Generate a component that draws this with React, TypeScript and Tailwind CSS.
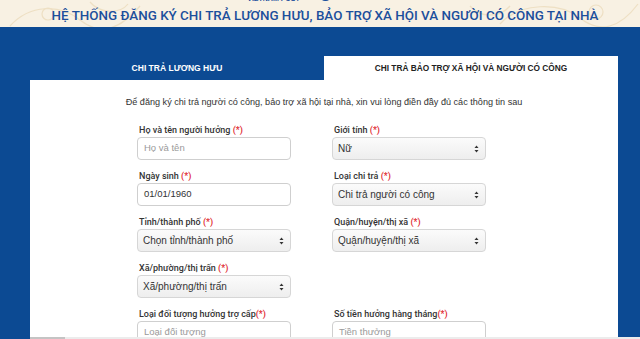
import React from "react";

const sans = { fontFamily: '"Liberation Sans", Arial, sans-serif' };

const Req = () => <span className="text-[#e0262d]">(*)</span>;

const Arrows = () => (
  <svg width="5" height="8" viewBox="0 0 5 8" className="shrink-0">
    <path d="M2.5 0.5 L4.5 3 L0.5 3 Z" fill="#333" />
    <path d="M2.5 7.5 L4.5 5 L0.5 5 Z" fill="#333" />
  </svg>
);

function Field({
  label,
  kind,
  value,
  placeholder,
  spaced = true,
}: {
  label: string;
  kind: "input" | "select";
  value?: string;
  placeholder?: string;
  spaced?: boolean;
}) {
  return (
    <div className="flex flex-col">
      <div
        className="mb-[1px] pl-[2px] text-[9px] leading-[12px] font-medium text-[#333]"
        style={{ fontFamily: "Roboto, sans-serif" }}
      >
        {label}
        {spaced ? " " : ""}
        <Req />
      </div>
      {kind === "input" ? (
        <div className="flex h-[23px] items-center rounded-[4px] border border-[#cfcfcf] bg-white px-[6px] text-[9.5px]">
          {value ? <span className="text-[#333]">{value}</span> : <span className="text-[#9a9a9a]">{placeholder}</span>}
        </div>
      ) : (
        <div className="flex h-[23px] items-center justify-between rounded-[4px] border border-[#d6d6d6] bg-gradient-to-b from-[#fbfbfb] to-[#eeeeee] pl-[5px] pr-[6px] text-[10px] text-[#333]">
          <span>{value}</span>
          <Arrows />
        </div>
      )}
    </div>
  );
}

export default function App() {
  return (
    <div className="flex h-[339px] w-[640px] flex-col overflow-hidden bg-[#0c4a93]" style={sans}>
      {/* header strip */}
      <header className="relative h-[27px] shrink-0 overflow-hidden bg-[#f8f1e3]">
        <svg className="absolute inset-0" width="640" height="27" viewBox="0 0 640 27">
          <g fill="none" stroke="#ecdcbc" strokeWidth="1.2" opacity="0.8">
            <path d="M10 26 C30 4, 60 4, 80 20 S120 30, 140 6" />
            <path d="M90 2 C100 14, 120 14, 128 4" />
            <path d="M500 24 C520 2, 560 2, 580 18 S620 28, 638 4" />
            <path d="M470 6 C480 18, 500 18, 510 6" />
            <circle cx="48" cy="14" r="6" />
            <circle cx="596" cy="12" r="7" />
          </g>
        </svg>
        <div className="relative flex flex-col items-center">
          <div className="-mt-[5px] mr-[62px] flex h-[7px] items-center gap-[20px]">
            <span className="text-[7px] font-bold leading-[7px] text-[#1c4f9c]">VIETNAM POST</span>
            <span className="-mt-[6px] h-[10px] w-[11px] rounded-full bg-[#1c4f9c]" />
          </div>
          <h1
            className="mt-[6px] ml-[10px] text-[13.4px] leading-[15px] font-medium whitespace-nowrap text-[#1c4f9c]"
            style={{ fontFamily: "Roboto, sans-serif" }}
          >
            HỆ THỐNG ĐĂNG KÝ CHI TRẢ LƯƠNG HƯU, BẢO TRỢ XÃ HỘI VÀ NGƯỜI CÓ CÔNG TẠI NHÀ
          </h1>
        </div>
      </header>

      {/* blue body */}
      <div className="min-h-0 flex-1 overflow-hidden pt-[29px] pl-[30px] pr-[22px]">
        <div className="grid h-[24px] grid-cols-2">
          <div className="flex items-center justify-center pt-[1px] text-[8.5px] font-bold text-white">CHI TRẢ LƯƠNG HƯU</div>
          <div className="flex items-center justify-center bg-white pt-[1px] text-[8.3px] font-bold text-[#222]">
            CHI TRẢ BẢO TRỢ XÃ HỘI VÀ NGƯỜI CÓ CÔNG
          </div>
        </div>
        <div className="h-[400px] bg-white pt-[17px]">
          <p className="text-center text-[9.1px] leading-[11px] text-[#333]">
            Để đăng ký chi trả người có công, bảo trợ xã hội tại nhà, xin vui lòng điền đầy đủ các thông tin sau
          </p>
          <div className="mt-[16px] grid grid-cols-[154px_154px] gap-x-[41px] gap-y-[10px] pl-[107px]">
            <Field label="Họ và tên người hưởng" kind="input" placeholder="Họ và tên" />
            <Field label="Giới tính" kind="select" value="Nữ" />
            <Field label="Ngày sinh" kind="input" value="01/01/1960" />
            <Field label="Loại chi trả" kind="select" value="Chi trả người có công" />
            <Field label="Tỉnh/thành phố" kind="select" value="Chọn tỉnh/thành phố" />
            <Field label="Quận/huyện/thị xã" kind="select" value="Quận/huyện/thị xã" />
            <Field label="Xã/phường/thị trấn" kind="select" value="Xã/phường/thị trấn" />
            <div />
            <Field label="Loại đối tượng hưởng trợ cấp" kind="input" placeholder="Loại đối tượng" spaced={false} />
            <Field label="Số tiền hưởng hàng tháng" kind="input" placeholder="Tiền thưởng" spaced={false} />
          </div>
        </div>
      </div>

      {/* scrollbar track */}
      <div className="flex h-[2px] shrink-0 bg-[#0c4a93]">
        <div className="ml-[30px] flex flex-1 bg-[#ececec]">
          <div className="w-[35px] bg-[#c4c4c4]" />
        </div>
      </div>
    </div>
  );
}
